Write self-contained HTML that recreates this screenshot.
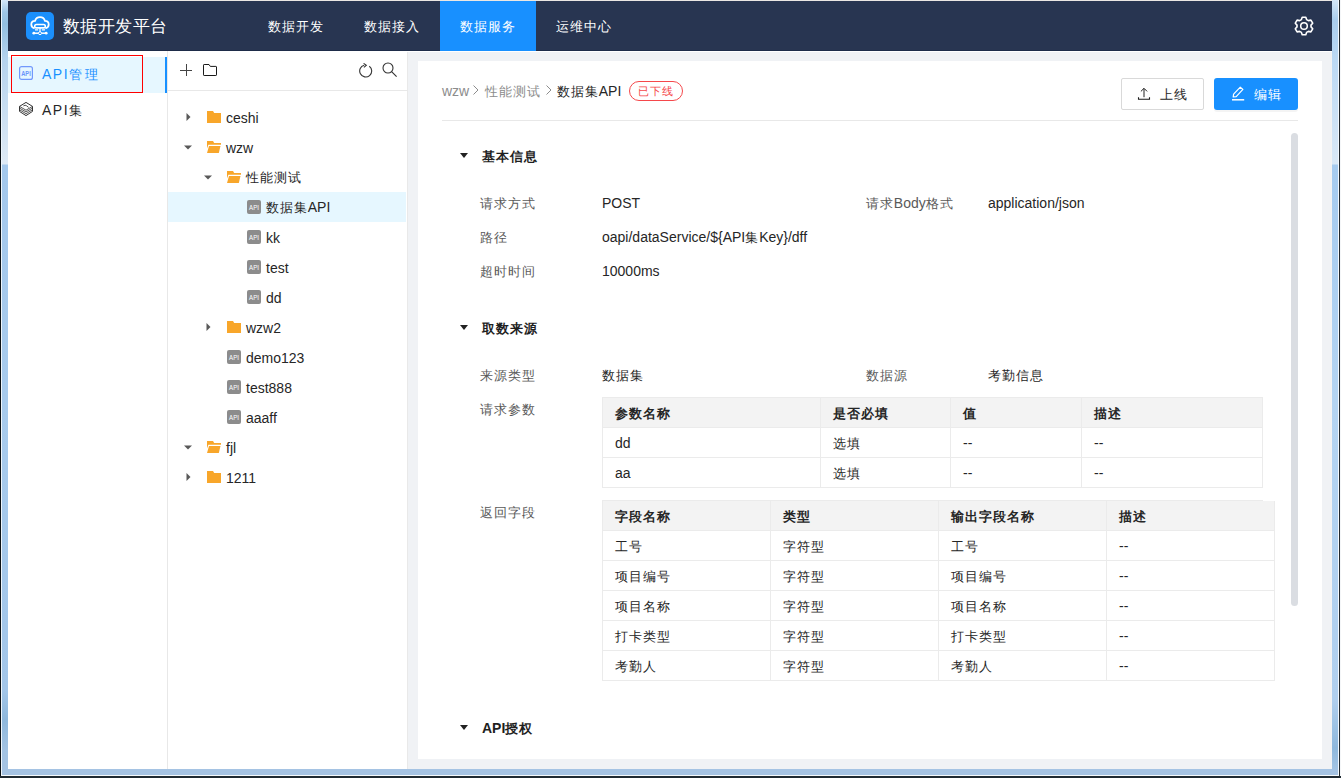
<!DOCTYPE html>
<html><head><meta charset="utf-8">
<style>
*{box-sizing:border-box;margin:0;padding:0}
html,body{width:1341px;height:778px;overflow:hidden;background:#fff}
body{position:relative;font-family:"Liberation Sans",sans-serif;font-size:14px;color:#262626}
.a{position:absolute}
.t{position:absolute;white-space:nowrap;line-height:20px;height:20px}
.c{font-size:0.93em;letter-spacing:0.07em}
</style></head><body>
<!-- window frame -->
<div class="a" style="left:0;top:0;width:1px;height:778px;background:#0b1116"></div>
<div class="a" style="left:1px;top:0;width:1px;height:776px;background:#eef6fd"></div>
<div class="a" style="left:2px;top:0;width:6px;height:775px;background:linear-gradient(to bottom,#d3e6f8 0px,#9fc6e6 12px,#93bfe0 24px,#b5d3ee 60px,#dfeaf5 164px,#a4c8ec 165px,#a8cbed 400px,#a3c6e9 690px,#8fb8dc 720px,#a3c3e3 750px,#a5c3e3 775px)"></div>
<div class="a" style="left:8px;top:0;width:1324px;height:1px;background:#ebe7e3"></div>
<div class="a" style="left:1332px;top:0;width:6px;height:775px;background:linear-gradient(to bottom,#d3e6f8 0px,#a9cdee 20px,#bcd9f4 60px,#d9e8f6 164px,#a6cbef 165px,#b4d4f2 400px,#b0cfee 700px,#8fb8dc 748px,#a9c7e5 775px)"></div>
<div class="a" style="left:1338px;top:0;width:1px;height:776px;background:#f3f9ff"></div>
<div class="a" style="left:1339px;top:0;width:1px;height:778px;background:#21282e"></div>
<div class="a" style="left:1340px;top:0;width:1px;height:778px;background:#f4f6f8"></div>
<div class="a" style="left:2px;top:769px;width:1336px;height:6px;background:#a5c3e3"></div>
<div class="a" style="left:1px;top:775px;width:1338px;height:1px;background:#f5f9fc"></div>
<div class="a" style="left:0;top:776px;width:1341px;height:2px;background:#1f2a32"></div>

<!-- header -->
<div class="a" style="left:8px;top:1px;width:1324px;height:50px;background:#283551"></div>
<div class="a" style="left:8px;top:50px;width:1324px;height:1px;background:#1e2c49"></div>
<div class="t" style="left:63px;top:17px;font-size:16.6px;letter-spacing:0.4px;color:#fff;line-height:20px">数据开发平台</div>
<div class="a" style="left:440px;top:1px;width:96px;height:50px;background:#1890ff"></div>
<div class="t" style="left:268px;top:16px;color:#fff"><span class="c">数据开发</span></div>
<div class="t" style="left:364px;top:16px;color:#fff"><span class="c">数据接入</span></div>
<div class="t" style="left:460px;top:16px;color:#fff"><span class="c">数据服务</span></div>
<div class="t" style="left:556px;top:16px;color:#fff"><span class="c">运维中心</span></div>

<!-- body bg -->
<div class="a" style="left:8px;top:51px;width:1324px;height:718px;background:#f0f2f5"></div>
<div class="a" style="left:8px;top:51px;width:1324px;height:1px;background:#fff"></div>
<div class="a" style="left:1331px;top:52px;width:1px;height:717px;background:#f3f3f3"></div>

<!-- left menu -->
<div class="a" style="left:8px;top:51px;width:159px;height:718px;background:#fff"></div>
<div class="a" style="left:167px;top:51px;width:1px;height:718px;background:#e8e8e8"></div>
<div class="a" style="left:8px;top:57px;width:157px;height:36px;background:#e6f7ff"></div>
<div class="a" style="left:165px;top:57px;width:2px;height:36px;background:#1890ff"></div>
<div class="a" style="left:11px;top:55px;width:132px;height:38px;border:1px solid #f00"></div>
<div class="t" style="left:42px;top:64px;color:#1890ff;letter-spacing:1.5px">API<span class="c" style="letter-spacing:2.5px">管理</span></div>
<div class="t" style="left:42px;top:100px;color:#262626;letter-spacing:1.5px">API<span class="c" style="letter-spacing:2.5px">集</span></div>

<!-- tree panel -->
<div class="a" style="left:168px;top:51px;width:239px;height:718px;background:#fff"></div>
<div class="a" style="left:407px;top:52px;width:1px;height:717px;background:#e9e9e9"></div>
<div class="a" style="left:168px;top:90px;width:240px;height:1px;background:#e8e8e8"></div>
<div class="a" style="left:168px;top:192px;width:238px;height:30px;background:#e6f7ff"></div>

<!-- tree rows -->
<svg class="a" style="left:186px;top:113px" width="5" height="8" viewBox="0 0 5 8"><path d="M0.5 0L4.5 4L0.5 8Z" fill="#595959"/></svg>
<svg class="a" style="left:207px;top:111px" width="14" height="12" viewBox="0 0 14 12"><path d="M0 0H6L7.2 2H14V12H0Z" fill="#f8a62a"/></svg>
<div class="t" style="left:226px;top:108px">ceshi</div>
<svg class="a" style="left:184px;top:145px" width="8" height="5" viewBox="0 0 8 5"><path d="M0 0.5H8L4 4.5Z" fill="#595959"/></svg>
<svg class="a" style="left:207px;top:141px" width="14" height="12" viewBox="0 0 14 12"><path d="M0 0H6L7.2 2H14V3.7H1.4L0 7.5Z" fill="#f8a62a"/><path d="M2 5H13.5L11.8 12H0Z" fill="#f8a62a"/></svg>
<div class="t" style="left:226px;top:138px">wzw</div>
<svg class="a" style="left:204px;top:175px" width="8" height="5" viewBox="0 0 8 5"><path d="M0 0.5H8L4 4.5Z" fill="#595959"/></svg>
<svg class="a" style="left:227px;top:171px" width="14" height="12" viewBox="0 0 14 12"><path d="M0 0H6L7.2 2H14V3.7H1.4L0 7.5Z" fill="#f8a62a"/><path d="M2 5H13.5L11.8 12H0Z" fill="#f8a62a"/></svg>
<div class="t" style="left:246px;top:167px"><span class="c">性能测试</span></div>
<svg class="a" style="left:247px;top:200px" width="14" height="14" viewBox="0 0 14 14"><rect width="14" height="14" rx="2" fill="#8c8c8c"/><text x="7" y="9.6" font-family="Liberation Sans" font-size="6.6" fill="#fff" text-anchor="middle" textLength="9.8" lengthAdjust="spacingAndGlyphs">API</text></svg>
<div class="t" style="left:266px;top:197px"><span class="c">数据集</span>API</div>
<svg class="a" style="left:247px;top:230px" width="14" height="14" viewBox="0 0 14 14"><rect width="14" height="14" rx="2" fill="#8c8c8c"/><text x="7" y="9.6" font-family="Liberation Sans" font-size="6.6" fill="#fff" text-anchor="middle" textLength="9.8" lengthAdjust="spacingAndGlyphs">API</text></svg>
<div class="t" style="left:266px;top:228px">kk</div>
<svg class="a" style="left:247px;top:260px" width="14" height="14" viewBox="0 0 14 14"><rect width="14" height="14" rx="2" fill="#8c8c8c"/><text x="7" y="9.6" font-family="Liberation Sans" font-size="6.6" fill="#fff" text-anchor="middle" textLength="9.8" lengthAdjust="spacingAndGlyphs">API</text></svg>
<div class="t" style="left:266px;top:258px">test</div>
<svg class="a" style="left:247px;top:290px" width="14" height="14" viewBox="0 0 14 14"><rect width="14" height="14" rx="2" fill="#8c8c8c"/><text x="7" y="9.6" font-family="Liberation Sans" font-size="6.6" fill="#fff" text-anchor="middle" textLength="9.8" lengthAdjust="spacingAndGlyphs">API</text></svg>
<div class="t" style="left:266px;top:288px">dd</div>
<svg class="a" style="left:206px;top:323px" width="5" height="8" viewBox="0 0 5 8"><path d="M0.5 0L4.5 4L0.5 8Z" fill="#595959"/></svg>
<svg class="a" style="left:227px;top:321px" width="14" height="12" viewBox="0 0 14 12"><path d="M0 0H6L7.2 2H14V12H0Z" fill="#f8a62a"/></svg>
<div class="t" style="left:246px;top:318px">wzw2</div>
<svg class="a" style="left:227px;top:350px" width="14" height="14" viewBox="0 0 14 14"><rect width="14" height="14" rx="2" fill="#8c8c8c"/><text x="7" y="9.6" font-family="Liberation Sans" font-size="6.6" fill="#fff" text-anchor="middle" textLength="9.8" lengthAdjust="spacingAndGlyphs">API</text></svg>
<div class="t" style="left:246px;top:348px">demo123</div>
<svg class="a" style="left:227px;top:380px" width="14" height="14" viewBox="0 0 14 14"><rect width="14" height="14" rx="2" fill="#8c8c8c"/><text x="7" y="9.6" font-family="Liberation Sans" font-size="6.6" fill="#fff" text-anchor="middle" textLength="9.8" lengthAdjust="spacingAndGlyphs">API</text></svg>
<div class="t" style="left:246px;top:378px">test888</div>
<svg class="a" style="left:227px;top:410px" width="14" height="14" viewBox="0 0 14 14"><rect width="14" height="14" rx="2" fill="#8c8c8c"/><text x="7" y="9.6" font-family="Liberation Sans" font-size="6.6" fill="#fff" text-anchor="middle" textLength="9.8" lengthAdjust="spacingAndGlyphs">API</text></svg>
<div class="t" style="left:246px;top:408px">aaaff</div>
<svg class="a" style="left:184px;top:445px" width="8" height="5" viewBox="0 0 8 5"><path d="M0 0.5H8L4 4.5Z" fill="#595959"/></svg>
<svg class="a" style="left:207px;top:441px" width="14" height="12" viewBox="0 0 14 12"><path d="M0 0H6L7.2 2H14V3.7H1.4L0 7.5Z" fill="#f8a62a"/><path d="M2 5H13.5L11.8 12H0Z" fill="#f8a62a"/></svg>
<div class="t" style="left:226px;top:438px">fjl</div>
<svg class="a" style="left:186px;top:473px" width="5" height="8" viewBox="0 0 5 8"><path d="M0.5 0L4.5 4L0.5 8Z" fill="#595959"/></svg>
<svg class="a" style="left:207px;top:471px" width="14" height="12" viewBox="0 0 14 12"><path d="M0 0H6L7.2 2H14V12H0Z" fill="#f8a62a"/></svg>
<div class="t" style="left:226px;top:468px">1211</div>

<!-- card -->
<div class="a" style="left:418px;top:61px;width:904px;height:698px;background:#fff"></div>


<!-- breadcrumb -->
<div class="t" style="left:442px;top:81px;color:#8c8c8c">wzw</div>
<svg class="a" style="left:473px;top:85px" width="6" height="10" viewBox="0 0 6 10"><path d="M0.5 0.5L5 5L0.5 9.5" fill="none" stroke="#8c8c8c" stroke-width="1"/></svg>
<div class="t" style="left:485px;top:81px;color:#8c8c8c"><span class="c">性能测试</span></div>
<svg class="a" style="left:546px;top:85px" width="6" height="10" viewBox="0 0 6 10"><path d="M0.5 0.5L5 5L0.5 9.5" fill="none" stroke="#8c8c8c" stroke-width="1"/></svg>
<div class="t" style="left:557px;top:81px;color:#262626"><span class="c">数据集</span>API</div>
<div class="a" style="left:629px;top:81px;width:54px;height:20px;border:1px solid #f5484b;border-radius:10px"></div>
<div class="t" style="left:638px;top:81px;color:#f5484b;font-size:12px;line-height:20px"><span class="c">已下线</span></div>

<!-- buttons -->
<div class="a" style="left:1121px;top:78px;width:83px;height:32px;border:1px solid #d9d9d9;border-radius:2px;background:#fff"></div>
<div class="t" style="left:1160px;top:84px;color:#262626"><span class="c">上线</span></div>
<div class="a" style="left:1214px;top:78px;width:84px;height:32px;border-radius:3px;background:#1890ff;box-shadow:0 2px 0 rgba(0,0,0,0.045)"></div>
<div class="t" style="left:1254px;top:84px;color:#fff"><span class="c">编辑</span></div>

<div class="a" style="left:442px;top:120px;width:856px;height:1px;background:#e8e8e8"></div>
<div class="a" style="left:1291px;top:133px;width:7px;height:473px;border-radius:3.5px;background:#dadde2"></div>

<!-- sections -->
<svg class="a" style="left:460px;top:153px" width="8" height="5" viewBox="0 0 8 5"><path d="M0 0H8L4 5Z" fill="#222"/></svg>
<div class="t" style="left:482px;top:146px;font-weight:bold;color:#1f1f1f"><span class="c">基本信息</span></div>

<div class="t" style="left:480px;top:193px;color:#595959"><span class="c">请求方式</span></div>
<div class="t" style="left:602px;top:193px;color:#262626">POST</div>
<div class="t" style="left:866px;top:193px;color:#595959"><span class="c">请求</span>Body<span class="c">格式</span></div>
<div class="t" style="left:988px;top:193px;color:#262626">application/json</div>
<div class="t" style="left:480px;top:227px;color:#595959"><span class="c">路径</span></div>
<div class="t" style="left:602px;top:227px;color:#262626">oapi/dataService/${API<span class="c">集</span>Key}/dff</div>
<div class="t" style="left:480px;top:261px;color:#595959"><span class="c">超时时间</span></div>
<div class="t" style="left:602px;top:261px;color:#262626">10000ms</div>

<svg class="a" style="left:460px;top:325px" width="8" height="5" viewBox="0 0 8 5"><path d="M0 0H8L4 5Z" fill="#222"/></svg>
<div class="t" style="left:482px;top:318px;font-weight:bold;color:#1f1f1f"><span class="c">取数来源</span></div>

<div class="t" style="left:480px;top:365px;color:#595959"><span class="c">来源类型</span></div>
<div class="t" style="left:602px;top:365px;color:#262626"><span class="c">数据集</span></div>
<div class="t" style="left:866px;top:365px;color:#595959"><span class="c">数据源</span></div>
<div class="t" style="left:988px;top:365px;color:#262626"><span class="c">考勤信息</span></div>
<div class="t" style="left:480px;top:399px;color:#595959"><span class="c">请求参数</span></div>
<div class="t" style="left:480px;top:502px;color:#595959"><span class="c">返回字段</span></div>

<svg class="a" style="left:460px;top:725px" width="8" height="5" viewBox="0 0 8 5"><path d="M0 0H8L4 5Z" fill="#222"/></svg>
<div class="t" style="left:482px;top:718px;font-weight:bold;color:#1f1f1f">API<span class="c">授权</span></div>

<!-- table1 -->
<div class="a" style="left:602px;top:397px;width:661px;height:91px;border:1px solid #ebebeb;background:#fff"></div>
<div class="a" style="left:603px;top:398px;width:659px;height:29px;background:#f3f3f3"></div>
<div class="a" style="left:602px;top:427px;width:660px;height:1px;background:#ebebeb"></div>
<div class="a" style="left:602px;top:457px;width:660px;height:1px;background:#ebebeb"></div>
<div class="a" style="left:820px;top:397px;width:1px;height:90px;background:#ebebeb"></div>
<div class="a" style="left:950px;top:397px;width:1px;height:90px;background:#ebebeb"></div>
<div class="a" style="left:1081px;top:397px;width:1px;height:90px;background:#ebebeb"></div>
<div class="t" style="left:615px;top:403px;font-weight:bold;color:#262626"><span class="c">参数名称</span></div>
<div class="t" style="left:833px;top:403px;font-weight:bold;color:#262626"><span class="c">是否必填</span></div>
<div class="t" style="left:963px;top:403px;font-weight:bold;color:#262626"><span class="c">值</span></div>
<div class="t" style="left:1094px;top:403px;font-weight:bold;color:#262626"><span class="c">描述</span></div>
<div class="t" style="left:615px;top:433px;color:#262626">dd</div>
<div class="t" style="left:833px;top:433px;color:#262626"><span class="c">选填</span></div>
<div class="t" style="left:963px;top:433px;color:#262626">--</div>
<div class="t" style="left:1094px;top:433px;color:#262626">--</div>
<div class="t" style="left:615px;top:463px;color:#262626">aa</div>
<div class="t" style="left:833px;top:463px;color:#262626"><span class="c">选填</span></div>
<div class="t" style="left:963px;top:463px;color:#262626">--</div>
<div class="t" style="left:1094px;top:463px;color:#262626">--</div>
<!-- table2 -->
<div class="a" style="left:602px;top:501px;width:673px;height:180px;border:1px solid #ebebeb;border-top:none;background:#fff"></div>
<div class="a" style="left:602px;top:500px;width:661px;height:1px;background:#ebebeb"></div>
<div class="a" style="left:603px;top:501px;width:671px;height:29px;background:#f3f3f3"></div>
<div class="a" style="left:602px;top:530px;width:672px;height:1px;background:#ebebeb"></div>
<div class="a" style="left:602px;top:560px;width:672px;height:1px;background:#ebebeb"></div>
<div class="a" style="left:602px;top:590px;width:672px;height:1px;background:#ebebeb"></div>
<div class="a" style="left:602px;top:620px;width:672px;height:1px;background:#ebebeb"></div>
<div class="a" style="left:602px;top:650px;width:672px;height:1px;background:#ebebeb"></div>
<div class="a" style="left:770px;top:500px;width:1px;height:180px;background:#ebebeb"></div>
<div class="a" style="left:938px;top:500px;width:1px;height:180px;background:#ebebeb"></div>
<div class="a" style="left:1106px;top:500px;width:1px;height:180px;background:#ebebeb"></div>
<div class="t" style="left:615px;top:506px;font-weight:bold;color:#262626"><span class="c">字段名称</span></div>
<div class="t" style="left:783px;top:506px;font-weight:bold;color:#262626"><span class="c">类型</span></div>
<div class="t" style="left:951px;top:506px;font-weight:bold;color:#262626"><span class="c">输出字段名称</span></div>
<div class="t" style="left:1119px;top:506px;font-weight:bold;color:#262626"><span class="c">描述</span></div>
<div class="t" style="left:615px;top:536px;color:#262626"><span class="c">工号</span></div>
<div class="t" style="left:783px;top:536px;color:#262626"><span class="c">字符型</span></div>
<div class="t" style="left:951px;top:536px;color:#262626"><span class="c">工号</span></div>
<div class="t" style="left:1119px;top:536px;color:#262626">--</div>
<div class="t" style="left:615px;top:566px;color:#262626"><span class="c">项目编号</span></div>
<div class="t" style="left:783px;top:566px;color:#262626"><span class="c">字符型</span></div>
<div class="t" style="left:951px;top:566px;color:#262626"><span class="c">项目编号</span></div>
<div class="t" style="left:1119px;top:566px;color:#262626">--</div>
<div class="t" style="left:615px;top:596px;color:#262626"><span class="c">项目名称</span></div>
<div class="t" style="left:783px;top:596px;color:#262626"><span class="c">字符型</span></div>
<div class="t" style="left:951px;top:596px;color:#262626"><span class="c">项目名称</span></div>
<div class="t" style="left:1119px;top:596px;color:#262626">--</div>
<div class="t" style="left:615px;top:626px;color:#262626"><span class="c">打卡类型</span></div>
<div class="t" style="left:783px;top:626px;color:#262626"><span class="c">字符型</span></div>
<div class="t" style="left:951px;top:626px;color:#262626"><span class="c">打卡类型</span></div>
<div class="t" style="left:1119px;top:626px;color:#262626">--</div>
<div class="t" style="left:615px;top:656px;color:#262626"><span class="c">考勤人</span></div>
<div class="t" style="left:783px;top:656px;color:#262626"><span class="c">字符型</span></div>
<div class="t" style="left:951px;top:656px;color:#262626"><span class="c">考勤人</span></div>
<div class="t" style="left:1119px;top:656px;color:#262626">--</div>

<!-- logo icon -->
<svg class="a" style="left:26px;top:12px" width="28" height="28" viewBox="0 0 28 28">
<rect x="0" y="0" width="28" height="28" rx="5" fill="#1b8ffc"/>
<path d="M8.6 16.3C6.4 15.8 5.3 14.2 5.3 12.5C5.3 10.5 6.9 9 9 8.9C9.7 6.6 11.7 5.2 14 5.2C16.3 5.2 18.3 6.6 19 8.9C21.1 9 22.7 10.5 22.7 12.5C22.7 14.2 21.6 15.8 19.4 16.3" fill="none" stroke="#fff" stroke-width="1.8"/>
<rect x="8.7" y="12.5" width="10.6" height="3.4" rx="1.7" fill="none" stroke="#fff" stroke-width="1.6"/>
<path d="M14 15.8V20" stroke="#fff" stroke-width="1.3"/>
<path d="M9 17.9H12.2M15.8 17.9H19" stroke="#fff" stroke-width="1.1"/>
<path d="M7.5 21.2H20.5" stroke="#fff" stroke-width="1.5"/>
<circle cx="7.8" cy="21.2" r="1.4" fill="#fff"/><circle cx="20.2" cy="21.2" r="1.4" fill="#fff"/><circle cx="14" cy="21.2" r="1.5" fill="#1b8ffc" stroke="#fff" stroke-width="1"/>
</svg>
<!-- gear -->
<svg class="a" style="left:1294px;top:16px" width="20" height="20" viewBox="0 0 20 20">
<path d="M8.2 1.2H11.8L12.6 3.6L14.4 4.6L16.9 4.1L18.7 7.2L17 9.1V10.9L18.7 12.8L16.9 15.9L14.4 15.4L12.6 16.4L11.8 18.8H8.2L7.4 16.4L5.6 15.4L3.1 15.9L1.3 12.8L3 10.9V9.1L1.3 7.2L3.1 4.1L5.6 4.6L7.4 3.6Z" fill="none" stroke="#fff" stroke-width="1.6" stroke-linejoin="round"/>
<circle cx="10" cy="10" r="3.3" fill="none" stroke="#fff" stroke-width="1.5"/>
</svg>
<!-- panel icons -->
<svg class="a" style="left:180px;top:64px" width="12" height="12" viewBox="0 0 12 12"><path d="M0 6.5H12M6.5 0V12" stroke="#444" stroke-width="1"/></svg>
<svg class="a" style="left:203px;top:64px" width="14" height="12" viewBox="0 0 14 12"><path d="M0.5 1.1Q0.5 0.5 1.1 0.5H6L7.3 2.4H12.9Q13.5 2.4 13.5 3V10.9Q13.5 11.5 12.9 11.5H1.1Q0.5 11.5 0.5 10.9Z" fill="none" stroke="#1a1a1a" stroke-width="1"/></svg>
<svg class="a" style="left:358px;top:63px" width="16" height="15" viewBox="0 0 16 15"><path d="M11.3 3.2A6 6 0 1 1 6.2 2.2" fill="none" stroke="#333" stroke-width="1.1"/><path d="M5.6 0.4L8.3 2.3L5.9 4.3" fill="none" stroke="#333" stroke-width="1.1"/></svg>
<svg class="a" style="left:382px;top:62px" width="16" height="16" viewBox="0 0 16 16"><circle cx="6" cy="6" r="5" fill="none" stroke="#333" stroke-width="1.1"/><path d="M9.6 9.6L14.6 14.6" stroke="#333" stroke-width="1.2"/></svg>
<!-- menu icons -->
<svg class="a" style="left:19px;top:66px" width="14" height="14" viewBox="0 0 14 14"><rect x="0.6" y="0.6" width="12.8" height="12.8" rx="2" fill="none" stroke="#7298fc" stroke-width="1.2"/><text x="7" y="10" font-family="Liberation Sans" font-weight="bold" font-size="7.2" fill="#6a93fb" text-anchor="middle" textLength="9.5" lengthAdjust="spacingAndGlyphs">API</text></svg>
<svg class="a" style="left:19px;top:102px" width="14" height="14" viewBox="0 0 14 14"><path d="M7 0.4L13.5 4.4V9.4L7 13.6L0.5 9.4V4.4Z" fill="none" stroke="#333" stroke-width="1"/><path d="M0.5 4.4L7 8.2L13.5 4.4M0.5 6.1L7 9.9L13.5 6.1M0.5 7.8L7 11.7L13.5 7.8" fill="none" stroke="#3a3a3a" stroke-width="0.85"/><path d="M4.4 3.9Q6.2 2.6 7.6 3.8L9.6 5.4" fill="none" stroke="#3a3a3a" stroke-width="0.9"/></svg>
<!-- button icons -->
<svg class="a" style="left:1137px;top:87px" width="14" height="14" viewBox="0 0 14 14"><path d="M7 1.6V10.2M3.9 4.4L7 1.3L10.1 4.4" fill="none" stroke="#222" stroke-width="1"/><path d="M1.5 10.2V12.3H12.5V10.2" fill="none" stroke="#1a1a1a" stroke-width="1.1"/></svg>
<svg class="a" style="left:1231px;top:86px" width="14" height="15" viewBox="0 0 14 15"><path d="M9.3 1.2L11.9 3.4L5.2 10.6L2.2 11L2.6 8.1Z" fill="none" stroke="#fff" stroke-width="1.2" stroke-linejoin="round"/><path d="M1 13.8H13.2" stroke="#fff" stroke-width="1.5"/></svg>
</body></html>
